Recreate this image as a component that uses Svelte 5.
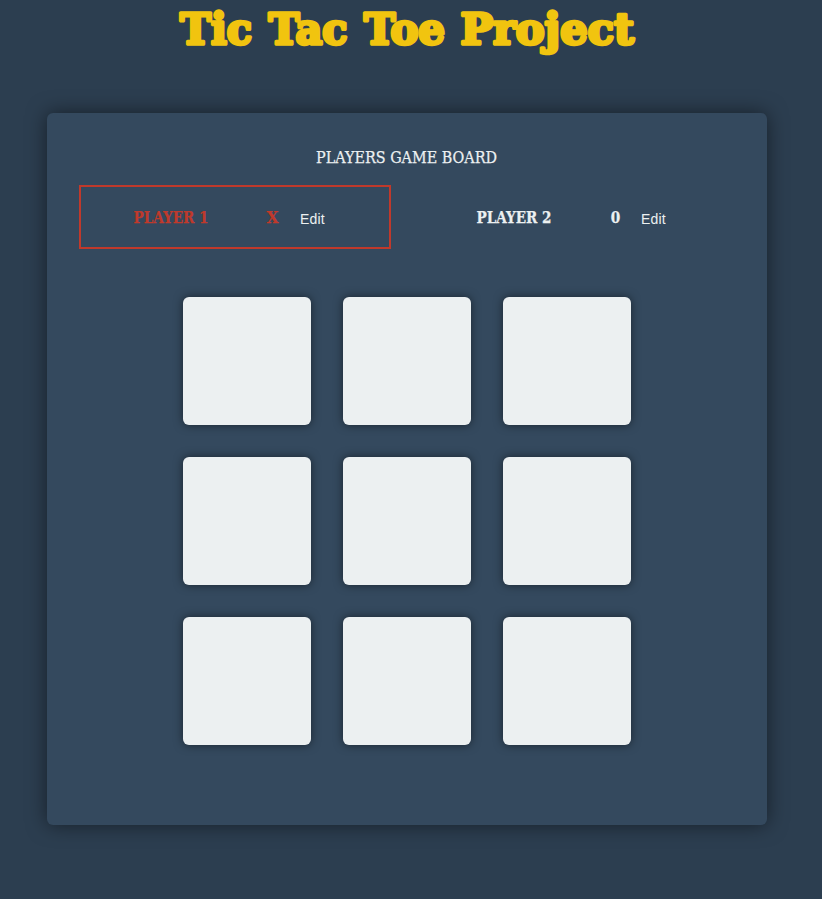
<script>
  const title = [
    { text: 'Tic', x: 180, width: 72 },
    { text: 'Tac', x: 268.5, width: 79 },
    { text: 'Toe', x: 364, width: 81 },
    { text: 'Project', x: 460.5, width: 173.5 }
  ];
  const players = [
    { name: 'PLAYER 1', symbol: 'X', active: true },
    { name: 'PLAYER 2', symbol: '0', active: false }
  ];
  let board = $state(Array(9).fill(''));
</script>

<main>
  <h1>
    <svg width="822" height="64">
      {#each title as word}
        <text x={word.x} y="44" textLength={word.width} lengthAdjust="spacingAndGlyphs">{word.text}</text>
      {/each}
    </svg>
  </h1>

  <section class="container">
    <div class="caption">
      <svg width="182" height="20">
        <text x="0" y="16" textLength="181" lengthAdjust="spacingAndGlyphs">PLAYERS GAME BOARD</text>
      </svg>
    </div>

    <div class="players">
      {#each players as player}
        <div class="player" class:active={player.active}>
          <svg class="name" width="76" height="20">
            <text x="0.5" y="16" textLength="75" lengthAdjust="spacingAndGlyphs">{player.name}</text>
          </svg>
          <svg class="symbol" width="12" height="20">
            <text x="6.5" y="16" text-anchor="middle" textLength={player.symbol === 'X' ? 12 : 9.5} lengthAdjust="spacingAndGlyphs">{player.symbol}</text>
          </svg>
          <button class="edit">Edit</button>
        </div>
      {/each}
    </div>

    <div class="board">
      {#each board as cell, i}
        <button class="cell" aria-label={`Cell ${i + 1}`}>{cell}</button>
      {/each}
    </div>
  </section>
</main>

<style>
  :global(body) {
    margin: 0;
    background: #2c3e50;
  }
  main {
    box-sizing: border-box;
    width: 822px;
    height: 899px;
    background: #2c3e50;
    overflow: hidden;
  }
  svg {
    display: block;
    overflow: visible;
  }
  h1 {
    margin: 0;
    height: 113px;
  }
  h1 text {
    font: bold 42.5px 'DejaVu Serif', serif;
    fill: #f1c40f;
    stroke: #f1c40f;
    stroke-width: 3.4px;
    stroke-linejoin: round;
  }
  .container {
    box-sizing: border-box;
    width: 720px;
    height: 712px;
    margin-left: 47px;
    padding: 34px 32px 0;
    border-radius: 6px;
    background: #34495e;
    box-shadow: 0 0 20px rgba(0, 0, 0, 0.5);
  }
  .caption {
    display: flex;
    justify-content: center;
    height: 38px;
  }
  .caption text {
    font: 16px 'DejaVu Serif', serif;
    fill: #ecf0f1;
    stroke: #ecf0f1;
    stroke-width: 0.25px;
  }
  .players {
    display: flex;
    gap: 32px;
  }
  .player {
    box-sizing: border-box;
    width: 312px;
    height: 64px;
    padding-left: 52px;
    border: 2px solid transparent;
    display: flex;
    align-items: center;
  }
  .player text {
    font: bold 16px 'DejaVu Serif', serif;
    fill: #ecf0f1;
    stroke: #ecf0f1;
    stroke-width: 0.25px;
  }
  .player.active {
    border-color: #c0392b;
  }
  .player.active text {
    fill: #c0392b;
    stroke: #c0392b;
  }
  .player:not(.active) {
    padding-left: 51px;
  }
  .symbol {
    margin-left: 57px;
  }
  .edit {
    margin: 4px 0 0 22px;
    padding: 0;
    border: 0;
    background: none;
    color: #ecf0f1;
    font: 14px/16px 'Liberation Sans', Arial, sans-serif;
    letter-spacing: 0.2px;
  }
  .player:not(.active) .edit {
    margin-left: 20px;
  }
  .board {
    display: grid;
    grid-template-columns: repeat(3, 128px);
    grid-auto-rows: 128px;
    gap: 32px;
    justify-content: center;
    margin-top: 48px;
  }
  .cell {
    padding: 0;
    border: 0;
    border-radius: 6px;
    background: #ecf0f1;
    box-shadow: 0 0 10px rgba(0, 0, 0, 0.5);
  }
</style>
